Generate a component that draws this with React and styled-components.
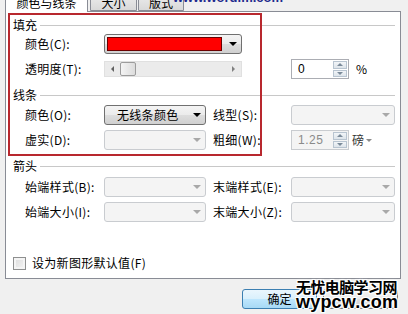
import React from 'react';
import styled, { createGlobalStyle } from 'styled-components';

const Global = createGlobalStyle`
  html, body {
    margin: 0;
    padding: 0;
    background: #f0f0f0;
  }
  body {
    font-family: "Noto Sans CJK SC", "Liberation Sans", sans-serif;
    font-size: 12px;
    color: #000;
  }
`;

const Root = styled.div`
  position: relative;
  width: 408px;
  height: 314px;
  overflow: hidden;
  background: #f0f0f0;
`;

const TabBar = styled.div`
  display: flex;
  align-items: flex-end;
  height: 11px;
  padding-left: 5px;
  position: relative;
  z-index: 1;
`;

const Tab = styled.div`
  box-sizing: border-box;
  width: ${p => p.$w}px;
  margin-left: ${p => p.$ml || 0}px;
  height: ${p => (p.$active ? 24 : 22)}px;
  margin-bottom: ${p => (p.$active ? -1 : 0)}px;
  border: 1px solid #898c95;
  border-bottom: ${p => (p.$active ? 'none' : '1px solid #898c95')};
  border-radius: 2px 2px 0 0;
  background: ${p =>
    p.$active ? '#fff' : 'linear-gradient(#f2f2f2, #e3e3e3 60%, #d9d9d9)'};
  display: flex;
  justify-content: center;
  align-items: flex-end;
  padding-bottom: ${p => (p.$active ? 3 : 1)}px;
  line-height: 12px;
`;

const SiteMark = styled.div`
  position: absolute;
  left: 173px;
  top: -9px;
  font-family: "Liberation Sans", sans-serif;
  font-weight: bold;
  font-size: 13px;
  line-height: 13px;
  color: #1f2b8e;
  z-index: 2;
`;

const Panel = styled.div`
  box-sizing: border-box;
  margin-left: 5px;
  width: 396px;
  height: 268px;
  background: #fff;
  border: 1px solid #898c95;
  padding: 0 5px 0 7px;
  display: flex;
  flex-direction: column;
`;

const Header = styled.div`
  display: flex;
  align-items: center;
  gap: 3px;
  height: 14px;
  margin-top: ${p => p.$mt}px;
  line-height: 14px;
`;

const Rule = styled.div`
  flex: 1;
  height: 1px;
  background: #c8c8c8;
`;

const Row = styled.div`
  display: flex;
  align-items: center;
  height: ${p => p.$h || 20}px;
  margin-top: ${p => p.$mt}px;
  padding-left: ${p => (p.$flush ? 0 : 12)}px;
`;

const Label = styled.div`
  width: ${p => p.$w}px;
  margin-left: ${p => p.$ml || 0}px;
  white-space: nowrap;
  line-height: 14px;
  letter-spacing: 0.3px;
`;

const Combo = styled.div`
  box-sizing: border-box;
  width: ${p => p.$w}px;
  height: 20px;
  border-radius: 3px;
  border: 1px solid ${p => (p.$disabled ? '#c9ccd0' : '#707070')};
  background: ${p =>
    p.$disabled
      ? '#f4f4f4'
      : 'linear-gradient(#f4f4f4, #ebebeb 50%, #dddddd 51%, #d0d0d0)'};
  display: flex;
  align-items: center;
  padding-left: ${p => p.$pl || 2}px;
`;

const Swatch = styled.div`
  box-sizing: border-box;
  width: 115px;
  height: 14px;
  background: #ff0000;
  border: 1px solid #6a0000;
`;

const ComboText = styled.div`
  flex: 1;
  line-height: 14px;
  letter-spacing: 0.3px;
`;

const Arrow = styled.div`
  margin-left: auto;
  width: 17px;
  height: 100%;
  display: flex;
  align-items: center;
  justify-content: center;
  &::after {
    content: '';
    border-left: 4px solid transparent;
    border-right: 4px solid transparent;
    border-top: 4px solid ${p => (p.$disabled ? '#a8a8a8' : '#000')};
  }
`;

const Slider = styled.div`
  box-sizing: border-box;
  width: 138px;
  height: 16px;
  background: #ebebeb;
  border: 1px solid #e0e0e0;
  display: flex;
  align-items: stretch;
`;

const ScrollBtn = styled.div`
  width: 15px;
  display: flex;
  align-items: center;
  justify-content: center;
  &::after {
    content: '';
    border-top: 3px solid transparent;
    border-bottom: 3px solid transparent;
    ${p =>
      p.$dir === 'left'
        ? 'border-right: 3px solid #606060;'
        : 'border-left: 3px solid #808080;'}
  }
`;

const Thumb = styled.div`
  box-sizing: border-box;
  width: 16px;
  border: 1px solid #9c9c9c;
  border-radius: 2px;
  background: linear-gradient(90deg, #f4f4f4, #dcdcdc);
`;

const Track = styled.div`
  flex: 1;
`;

const NumberBox = styled.div`
  box-sizing: border-box;
  width: 58px;
  height: 20px;
  margin-left: ${p => p.$ml || 0}px;
  border: 1px solid ${p => (p.$disabled ? '#c9ccd0' : '#abadb3')};
  background: ${p => (p.$disabled ? '#f4f4f4' : '#fff')};
  color: ${p => (p.$disabled ? '#8a8a8a' : '#000')};
  display: flex;
  align-items: stretch;
`;

const NumberText = styled.div`
  flex: 1;
  padding-left: 6px;
  display: flex;
  align-items: center;
  font-family: "Liberation Sans", sans-serif;
  letter-spacing: 0.5px;
`;

const Spinner = styled.div`
  width: 14px;
  margin: 1px 1px 1px 0;
  display: flex;
  flex-direction: column;
  gap: 1px;
`;

const SpinBtn = styled.div`
  flex: 1;
  box-sizing: border-box;
  border: 1px solid #b8c4d0;
  background: linear-gradient(#f2f5f8, #dde4ea);
  display: flex;
  align-items: center;
  justify-content: center;
  &::after {
    content: '';
    border-left: 3px solid transparent;
    border-right: 3px solid transparent;
    ${p =>
      p.$dir === 'up'
        ? 'border-bottom: 3px solid #7a8a99;'
        : 'border-top: 3px solid #7a8a99;'}
  }
`;

const Unit = styled.div`
  margin-left: ${p => p.$ml}px;
  display: flex;
  align-items: center;
  gap: 2px;
  color: ${p => p.$color || '#000'};
  line-height: 14px;
`;

const Caret = styled.span`
  border-left: 3px solid transparent;
  border-right: 3px solid transparent;
  border-top: 3px solid #8a8a8a;
`;

const Checkbox = styled.div`
  box-sizing: border-box;
  width: 13px;
  height: 13px;
  border: 1px solid #8e8f8f;
  background: linear-gradient(135deg, #dcdcdc, #f4f4f4);
  box-shadow: inset 0 0 0 2px #f4f4f4;
  margin-right: 6px;
`;

const ButtonBar = styled.div`
  display: flex;
  justify-content: flex-end;
  gap: 6px;
  padding-right: 10px;
  margin-top: 10px;
`;

const Button = styled.div`
  box-sizing: border-box;
  width: 75px;
  height: 20px;
  border-radius: 3px;
  border: 1px solid ${p => (p.$primary ? '#3c7fb1' : '#707070')};
  background: ${p =>
    p.$primary
      ? 'linear-gradient(#eaf6fd, #d9f0fc 50%, #bee6fd 51%, #a7d9f5)'
      : 'linear-gradient(#f2f2f2, #ebebeb 50%, #dddddd 51%, #cfcfcf)'};
  display: flex;
  align-items: center;
  justify-content: center;
  line-height: 14px;
`;

const Annotation = styled.div`
  position: absolute;
  left: 8px;
  top: 13px;
  width: 254px;
  height: 143px;
  box-sizing: border-box;
  border: 2px solid #b8282e;
  pointer-events: none;
`;

const Watermark = styled.div`
  position: absolute;
  left: 296px;
  top: 278px;
  display: flex;
  flex-direction: column;
  font-weight: bold;
  color: #000;
  text-shadow: 1px 1px 0 #fff, -1px -1px 0 #fff, 1px -1px 0 #fff,
    -1px 1px 0 #fff, 0 0 3px #fff;
`;

const MarkCn = styled.div`
  font-family: "Noto Sans CJK SC", sans-serif;
  font-size: 15px;
  line-height: 17px;
  letter-spacing: -0.6px;
`;

const MarkEn = styled.div`
  font-family: "Liberation Sans", sans-serif;
  font-size: 18px;
  line-height: 14px;
  letter-spacing: 0.2px;
`;

const Disabled = ({ w }) => (
  <Combo $w={w} $disabled>
    <Arrow $disabled />
  </Combo>
);

const Spin = () => (
  <Spinner>
    <SpinBtn $dir="up" />
    <SpinBtn $dir="down" />
  </Spinner>
);

const App = () => (
  <Root>
    <Global />
    <SiteMark>www.wordlm.com</SiteMark>
    <TabBar>
      <Tab $active $w={83}>颜色与线条</Tab>
      <Tab $w={47} $ml={2}>大小</Tab>
      <Tab $w={46} $ml={1}>版式</Tab>
    </TabBar>

    <Panel>
      <Header $mt={6}>
        填充
        <Rule />
      </Header>
      <Row $mt={2}>
        <Label $w={79}>颜色(C):</Label>
        <Combo $w={138}>
          <Swatch />
          <Arrow />
        </Combo>
      </Row>
      <Row $mt={5}>
        <Label $w={79}>透明度(T):</Label>
        <Slider>
          <ScrollBtn $dir="left" />
          <Thumb />
          <Track />
          <ScrollBtn $dir="right" />
        </Slider>
        <NumberBox $ml={49}>
          <NumberText>0</NumberText>
          <Spin />
        </NumberBox>
        <Unit $ml={7}>%</Unit>
      </Row>

      <Header $mt={9}>
        线条
        <Rule />
      </Header>
      <Row $mt={3}>
        <Label $w={79}>颜色(O):</Label>
        <Combo $w={102} $pl={12}>
          <ComboText>无线条颜色</ComboText>
          <Arrow />
        </Combo>
        <Label $w={78} $ml={7}>线型(S):</Label>
        <Disabled w={104} />
      </Row>
      <Row $mt={5}>
        <Label $w={79}>虚实(D):</Label>
        <Disabled w={102} />
        <Label $w={78} $ml={7}>粗细(W):</Label>
        <NumberBox $disabled>
          <NumberText>1.25</NumberText>
          <Spin />
        </NumberBox>
        <Unit $ml={3} $color="#333">
          磅<Caret />
        </Unit>
      </Row>

      <Header $mt={9}>
        箭头
        <Rule />
      </Header>
      <Row $mt={4}>
        <Label $w={79}>始端样式(B):</Label>
        <Disabled w={102} />
        <Label $w={78} $ml={7}>末端样式(E):</Label>
        <Disabled w={104} />
      </Row>
      <Row $mt={5}>
        <Label $w={79}>始端大小(I):</Label>
        <Disabled w={102} />
        <Label $w={78} $ml={7}>末端大小(Z):</Label>
        <Disabled w={104} />
      </Row>

      <Row $mt={34} $h={14} $flush>
        <Checkbox />
        <Label>设为新图形默认值(F)</Label>
      </Row>
    </Panel>

    <ButtonBar>
      <Button $primary>确定</Button>
      <Button />
    </ButtonBar>

    <Annotation />
    <Watermark>
      <MarkCn>无忧电脑学习网</MarkCn>
      <MarkEn>wypcw.com</MarkEn>
    </Watermark>
  </Root>
);

export default App;
